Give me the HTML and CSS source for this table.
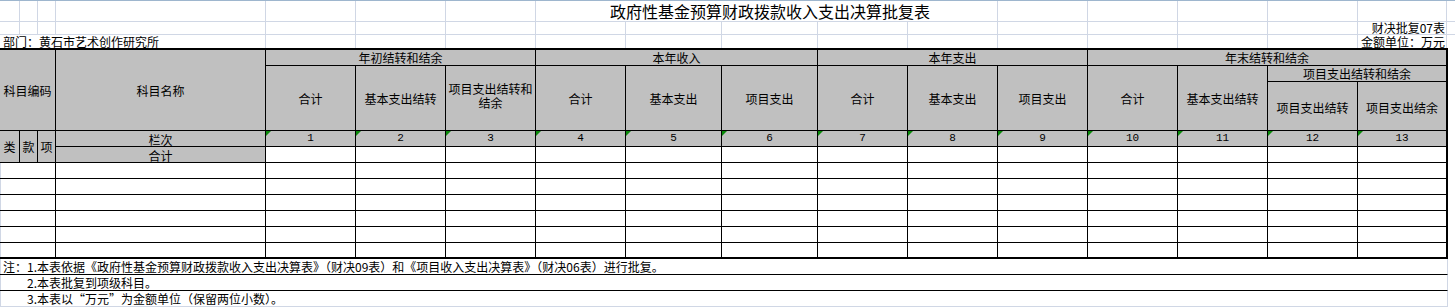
FILE: index.html
```html
<!DOCTYPE html>
<html lang="zh-CN">
<head>
<meta charset="utf-8">
<title>政府性基金预算财政拨款收入支出决算批复表</title>
<link rel="stylesheet" href="styles.css">
</head>
<body>
<div class="top">
  <div class="g"></div><div class="g"></div><div class="g"></div><div class="g"></div><div class="g"></div><div class="g"></div><div class="g"></div>
  <div class="g title">政府性基金预算财政拨款收入支出决算批复表</div>
  <div class="g"></div><div class="g"></div><div class="g"></div><div class="g"></div><div class="g"></div>
  <div class="g fill"></div>

  <div class="g"></div><div class="g"></div><div class="g"></div><div class="g"></div><div class="g"></div><div class="g"></div><div class="g"></div><div class="g"></div>
  <div class="g"></div><div class="g"></div><div class="g"></div><div class="g"></div><div class="g"></div><div class="g"></div><div class="g"></div><div class="g"></div>
  <div class="g right">财决批复07表</div>
  <div class="g fill"></div>

  <div class="g nb dept">部门：黄石市艺术创作研究所</div>
  <div class="g nb"></div><div class="g nb"></div><div class="g nb"></div><div class="g nb"></div><div class="g nb"></div><div class="g nb"></div>
  <div class="g nb"></div><div class="g nb"></div><div class="g nb"></div><div class="g nb"></div><div class="g nb"></div><div class="g nb"></div>
  <div class="g nb right">金额单位：万元</div>
  <div class="g nb fill"></div>
</div>

<div class="tbl">
  <!-- header row 1 -->
  <div class="c h s3 r3">科目编码</div>
  <div class="c h r3">科目名称</div>
  <div class="c h s3">年初结转和结余</div>
  <div class="c h s3">本年收入</div>
  <div class="c h s3">本年支出</div>
  <div class="c h s4">年末结转和结余</div>
  <!-- header row 2 -->
  <div class="c h r2">合计</div>
  <div class="c h r2">基本支出结转</div>
  <div class="c h r2 two">项目支出结转和<br>结余</div>
  <div class="c h r2">合计</div>
  <div class="c h r2">基本支出</div>
  <div class="c h r2">项目支出</div>
  <div class="c h r2">合计</div>
  <div class="c h r2">基本支出</div>
  <div class="c h r2">项目支出</div>
  <div class="c h r2">合计</div>
  <div class="c h r2">基本支出结转</div>
  <div class="c h s2">项目支出结转和结余</div>
  <!-- header row 3 -->
  <div class="c h low">项目支出结转</div>
  <div class="c h low">项目支出结余</div>
  <!-- 栏次 -->
  <div class="c h r2">类</div>
  <div class="c h r2">款</div>
  <div class="c h r2">项</div>
  <div class="c h bot">栏次</div>
  <div class="c h n">1</div><div class="c h n">2</div><div class="c h n">3</div><div class="c h n">4</div><div class="c h n">5</div><div class="c h n">6</div><div class="c h n">7</div><div class="c h n">8</div><div class="c h n">9</div><div class="c h n">10</div><div class="c h n">11</div><div class="c h n">12</div><div class="c h n">13</div>
  <!-- 合计 -->
  <div class="c h bot">合计</div>
  <div class="c"></div><div class="c"></div><div class="c"></div><div class="c"></div><div class="c"></div><div class="c"></div><div class="c"></div><div class="c"></div><div class="c"></div><div class="c"></div><div class="c"></div><div class="c"></div><div class="c"></div>
  <!-- data rows -->
  <div class="c s3 edge"></div><div class="c"></div>
  <div class="c"></div><div class="c"></div><div class="c"></div><div class="c"></div><div class="c"></div><div class="c"></div><div class="c"></div><div class="c"></div><div class="c"></div><div class="c"></div><div class="c"></div><div class="c"></div><div class="c"></div>
  <div class="c s3 edge"></div><div class="c"></div>
  <div class="c"></div><div class="c"></div><div class="c"></div><div class="c"></div><div class="c"></div><div class="c"></div><div class="c"></div><div class="c"></div><div class="c"></div><div class="c"></div><div class="c"></div><div class="c"></div><div class="c"></div>
  <div class="c s3 edge"></div><div class="c"></div>
  <div class="c"></div><div class="c"></div><div class="c"></div><div class="c"></div><div class="c"></div><div class="c"></div><div class="c"></div><div class="c"></div><div class="c"></div><div class="c"></div><div class="c"></div><div class="c"></div><div class="c"></div>
  <div class="c s3 edge"></div><div class="c"></div>
  <div class="c"></div><div class="c"></div><div class="c"></div><div class="c"></div><div class="c"></div><div class="c"></div><div class="c"></div><div class="c"></div><div class="c"></div><div class="c"></div><div class="c"></div><div class="c"></div><div class="c"></div>
  <div class="c s3 edge"></div><div class="c"></div>
  <div class="c"></div><div class="c"></div><div class="c"></div><div class="c"></div><div class="c"></div><div class="c"></div><div class="c"></div><div class="c"></div><div class="c"></div><div class="c"></div><div class="c"></div><div class="c"></div><div class="c"></div>
  <div class="c s3 edge"></div><div class="c"></div>
  <div class="c"></div><div class="c"></div><div class="c"></div><div class="c"></div><div class="c"></div><div class="c"></div><div class="c"></div><div class="c"></div><div class="c"></div><div class="c"></div><div class="c"></div><div class="c"></div><div class="c"></div>
</div>

<div class="notes">
  <div class="note">注：1.本表依据《政府性基金预算财政拨款收入支出决算表》（财决09表）和《项目收入支出决算表》（财决06表）进行批复。</div>
  <div class="note ind">2.本表批复到项级科目。</div>
  <div class="note ind last">3.本表以“万元”为金额单位（保留两位小数）。</div>
</div>
</body>
</html>
```

FILE: styles.css
```css
* {
  box-sizing: border-box;
}

html,
body {
  margin: 0;
  padding: 0;
  background: #ffffff;
}

body {
  width: 1455px;
  height: 307px;
  overflow: hidden;
  border-top: 1px solid #9eb6ce;
  font-family: "Noto Sans CJK SC", "Noto Sans", sans-serif;
  font-size: 12px;
  color: #000000;
}

/* ---------- sheet area above the table ---------- */
.top {
  display: grid;
  grid-template-columns: 20px 18px 18px 210px 90px 90px 90px 90px 96px 96px 90px 90px 90px 90px 90px 90px 89px 1fr;
  grid-template-rows: 21px 13px 13px;
}

.g {
  border-right: 1px solid #d0d7e5;
  border-bottom: 1px solid #d0d7e5;
  white-space: nowrap;
  min-width: 0;
}

.g.nb {
  border-bottom: none;
}

.g.fill {
  border-right: none;
}

.title {
  grid-column: span 5;
  display: flex;
  align-items: center;
  justify-content: center;
  padding-left: 7px;
  font-size: 16px;
  line-height: 20px;
}

.right {
  display: flex;
  align-items: flex-end;
  justify-content: flex-end;
  line-height: 12px;
  padding-right: 1px;
}

.dept {
  grid-column: span 4;
  display: flex;
  align-items: flex-end;
  padding-left: 3px;
  line-height: 12px;
}

/* ---------- the bordered table ---------- */
.tbl {
  display: grid;
  width: max-content;
  grid-template-columns: 20px 18px 18px 210px 90px 90px 90px 90px 96px 96px 90px 90px 90px 90px 90px 90px 89px;
  grid-template-rows: 16px 16px 49px 16px 16px 16px 16px 16px 16px 16px 15px;
  border-top: 2px solid #000000;
  border-right: 1px solid #000000;
  border-bottom: 1px solid #000000;
}

.c {
  position: relative;
  min-width: 0;
  display: flex;
  align-items: center;
  justify-content: center;
  text-align: center;
  white-space: nowrap;
  line-height: 13px;
  border-right: 1px solid #000000;
  border-bottom: 1px solid #000000;
  background: #ffffff;
}

.h {
  background: #c0c0c0;
}

.s2 { grid-column: span 2; }
.s3 { grid-column: span 3; }
.s4 { grid-column: span 4; }
.r2 { grid-row: span 2; }
.r3 { grid-row: span 3; }

.two {
  white-space: normal;
  line-height: 14px;
  padding-bottom: 4px;
}

.low {
  padding-top: 2px;
}

.bot {
  align-items: flex-end;
  line-height: 13px;
  padding-bottom: 0;
  overflow: visible;
}

.n {
  font-family: "Liberation Mono", "DejaVu Sans Mono", monospace;
  font-size: 11px;
}

.n::before {
  content: "";
  position: absolute;
  top: 0;
  left: 0;
  border-top: 5px solid #0a8a0a;
  border-right: 5px solid transparent;
}

.edge {
  box-shadow: inset 1px 0 0 #d0d7e5;
}

/* ---------- notes ---------- */
.notes {
  display: flex;
  flex-direction: column;
  width: 1448px;
}

.note {
  height: 16px;
  padding-left: 3px;
  line-height: 15px;
  white-space: nowrap;
  border-right: 1px solid #d0d7e5;
  border-bottom: 1px solid #000000;
  box-shadow: inset 1px 0 0 #d0d7e5;
}

.note.ind {
  padding-left: 27px;
}

.note.last {
  border-bottom-color: #d0d7e5;
}
```
